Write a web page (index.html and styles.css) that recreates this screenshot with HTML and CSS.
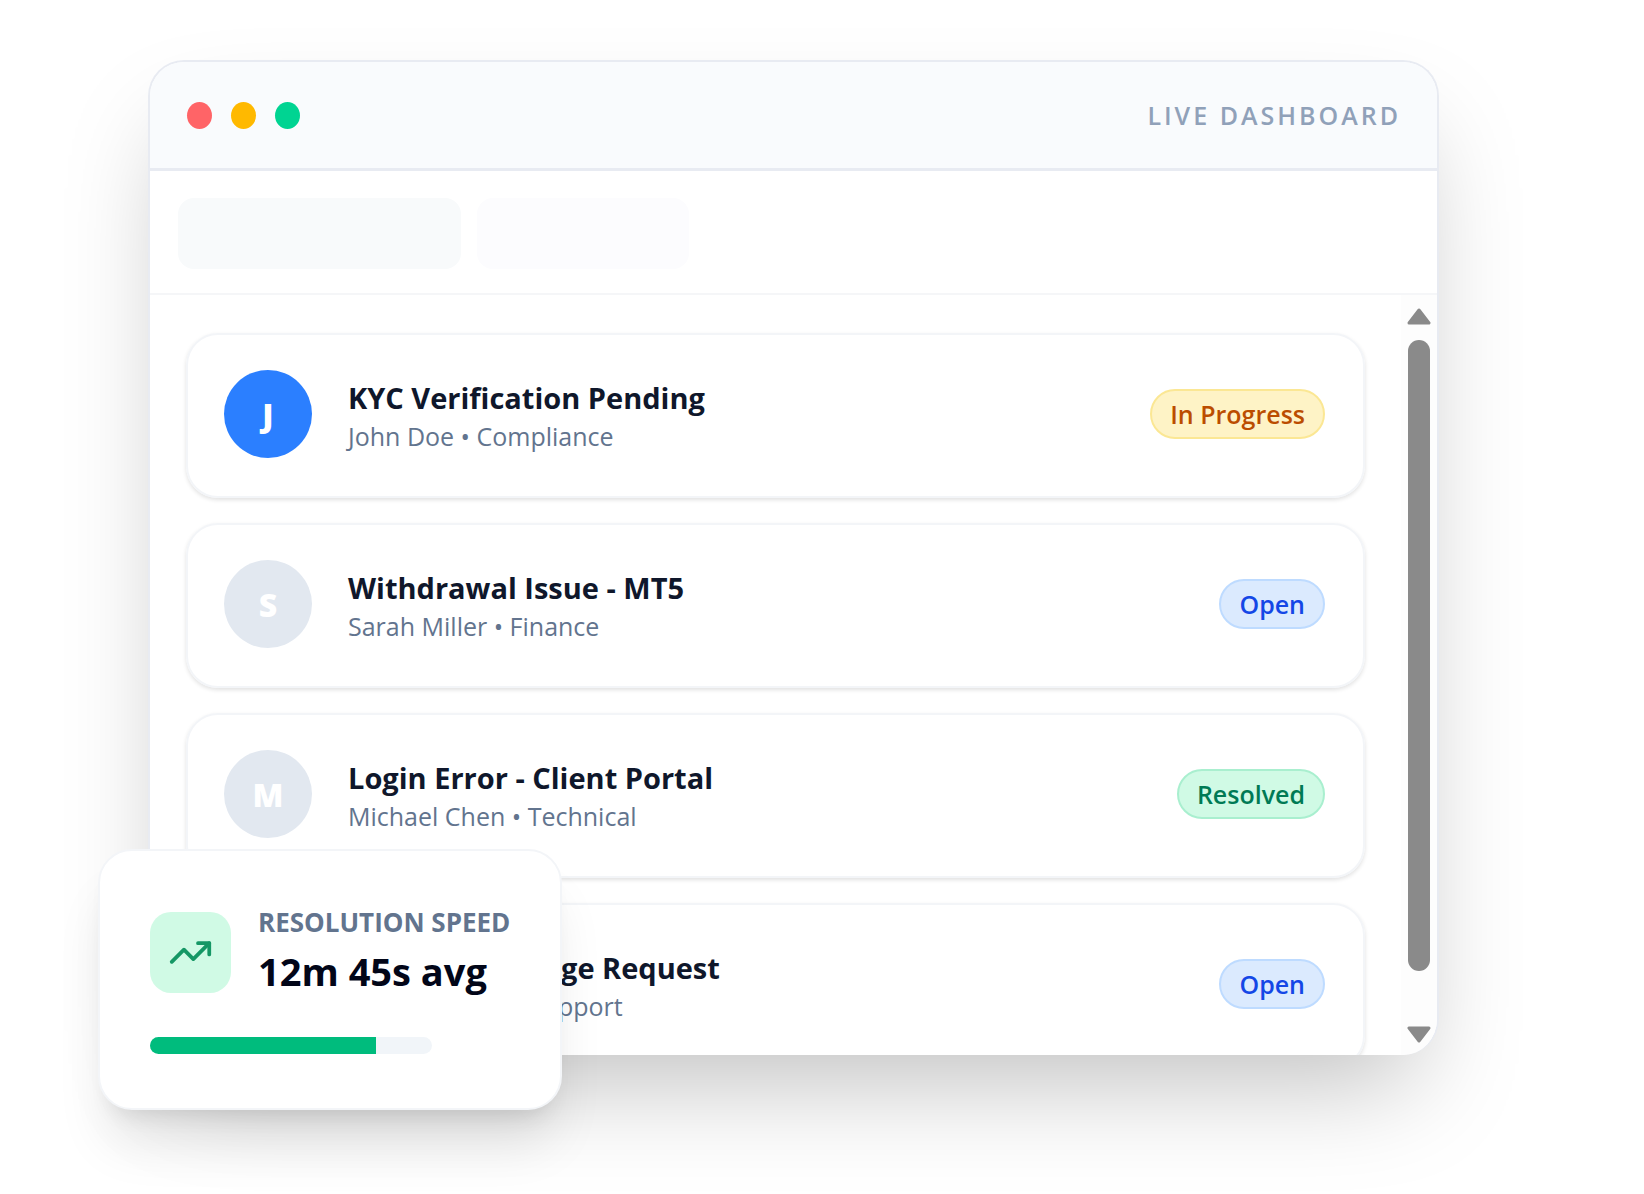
FILE: index.html
```
<!DOCTYPE html>
<html lang="en">

<head>
    <meta charset="utf-8">
    <title>Live Dashboard</title>
    <link rel="stylesheet" href="styles.css">
</head>

<body>

    <main class="stage">
        <div class="preview">

            <!-- App window -->
            <section class="window">
                <header class="titlebar">
                    <div class="dots">
                        <span class="dot red"></span>
                        <span class="dot yellow"></span>
                        <span class="dot green"></span>
                    </div>
                    <span class="live">LIVE DASHBOARD</span>
                </header>

                <div class="toolbar">
                    <div class="skeleton"></div>
                    <div class="skeleton short"></div>
                </div>

                <div class="content">
                    <div class="tickets">
                        <article class="ticket">
                            <div class="avatar active">J</div>
                            <div class="info">
                                <h3>KYC Verification Pending</h3>
                                <p>John Doe • Compliance</p>
                            </div>
                            <span class="badge progress">In Progress</span>
                        </article>
                        <article class="ticket">
                            <div class="avatar">S</div>
                            <div class="info">
                                <h3>Withdrawal Issue - MT5</h3>
                                <p>Sarah Miller • Finance</p>
                            </div>
                            <span class="badge open">Open</span>
                        </article>
                        <article class="ticket">
                            <div class="avatar">M</div>
                            <div class="info">
                                <h3>Login Error - Client Portal</h3>
                                <p>Michael Chen • Technical</p>
                            </div>
                            <span class="badge resolved">Resolved</span>
                        </article>
                        <article class="ticket">
                            <div class="avatar">E</div>
                            <div class="info">
                                <h3>Leverage Change Request</h3>
                                <p>Emma Wilson • Support</p>
                            </div>
                            <span class="badge open">Open</span>
                        </article>
                    </div>

                    <!-- Scrollbar -->
                    <div class="scrollbar">
                        <svg width="24" height="18" viewBox="0 0 24 18">
                            <path d="M12 3 L22 16 H2 Z" />
                        </svg>
                        <div class="track">
                            <div class="thumb"></div>
                        </div>
                        <svg width="24" height="18" viewBox="0 0 24 18">
                            <path d="M2 2 H22 L12 15 Z" />
                        </svg>
                    </div>
                </div>
            </section>

            <!-- Floating stat -->
            <aside class="stat">
                <div class="stat-top">
                    <div class="stat-icon">
                        <svg width="45" height="45" viewBox="0 0 24 24">
                            <polyline points="22 7 13.5 15.5 8.5 10.5 2 17" />
                            <polyline points="16 7 22 7 22 13" />
                        </svg>
                    </div>
                    <div>
                        <p class="stat-label">RESOLUTION SPEED</p>
                        <p class="stat-value">12m 45s avg</p>
                    </div>
                </div>
                <div class="bar">
                    <div class="fill" style="width: 80%"></div>
                </div>
            </aside>

        </div>
    </main>

</body>

</html>
```
FILE: styles.css
```
* {
    box-sizing: border-box;
}

body {
    margin: 0;
    background: #fff;
    font-family: "Open Sans", "Noto Sans", sans-serif;
    color: #0f172b;
    overflow: hidden;
}

h3,
p {
    margin: 0;
}

.stage {
    padding: 60px 205px 138px 148px;
}

.preview {
    position: relative;
}

/* window */
.window {
    background: #fff;
    border: 2px solid #e8ebf2;
    border-bottom: none;
    border-radius: 36px;
    overflow: hidden;
    box-shadow: 0 52px 104px -25px rgba(0, 0, 0, 0.25);
}

.titlebar {
    display: flex;
    align-items: center;
    justify-content: space-between;
    height: 109px;
    padding: 0 36px 0 37px;
    background: #f9fbfd;
    border-bottom: 3px solid #e8ebf2;
}

.dots {
    display: flex;
    gap: 19px;
}

.dot {
    width: 25px;
    height: 27px;
    border-radius: 50%;
}

.red {
    background: #ff6467;
}

.yellow {
    background: #ffb900;
}

.green {
    background: #00d492;
}

.live {
    font-size: 25px;
    font-weight: 600;
    letter-spacing: 3px;
    color: #90a1b9;
}

.toolbar {
    display: flex;
    gap: 16px;
    padding: 27px 28px 24px;
    border-bottom: 2px solid #f5f6f8;
}

.skeleton {
    width: 283px;
    height: 71px;
    border-radius: 16px;
    background: #f8fafb;
}

.skeleton.short {
    width: 212px;
    background: #fcfcfe;
}

/* ticket list */
.content {
    display: flex;
    max-height: 760px;
}

.tickets {
    flex: 1;
    display: flex;
    flex-direction: column;
    gap: 25px;
    padding: 38px 36px 0 36px;
}

.ticket {
    flex: none;
    display: flex;
    align-items: center;
    gap: 36px;
    padding: 35px 38px 38px 36px;
    border: 2px solid #f3f5f8;
    border-radius: 32px;
    box-shadow: 0 2px 4px rgba(0, 0, 0, 0.12);
}

.avatar {
    display: flex;
    align-items: center;
    justify-content: center;
    width: 88px;
    height: 88px;
    border-radius: 50%;
    background: #e2e8f0;
    color: #fff;
    font-size: 32px;
    font-weight: 800;
}

.avatar.active {
    background: #2b7fff;
}

.info {
    flex: 1;
    padding-top: 6px;
}

.info h3 {
    font-size: 29px;
    font-weight: 700;
    line-height: 38px;
}

.info p {
    font-size: 25px;
    line-height: 38px;
    color: #62748e;
}

.badge {
    padding: 0 18px;
    border: 2px solid;
    border-radius: 25px;
    font-size: 25px;
    font-weight: 600;
    line-height: 46px;
}

.progress {
    background: #fef3c6;
    border-color: #fbe794;
    color: #bb4d00;
}

.open {
    background: #dbeafe;
    border-color: #bedbff;
    color: #1447e6;
}

.resolved {
    background: #d0fae5;
    border-color: #a9efcf;
    color: #007a55;
}

/* scrollbar */
.scrollbar {
    display: flex;
    flex-direction: column;
    align-items: center;
    width: 36px;
    padding: 12px 0 11px;
    background: #fdfdfd;
}

.scrollbar svg {
    flex: none;
    fill: #8a8a8a;
    stroke: #8a8a8a;
    stroke-width: 3;
    stroke-linejoin: round;
}

.track {
    flex: 1;
    padding: 15px 0 55px;
}

.thumb {
    width: 22px;
    height: 100%;
    border-radius: 11px;
    background: #8a8a8a;
}

/* floating stat card */
.stat {
    position: absolute;
    left: -50px;
    bottom: -55px;
    padding: 52px 50px 54px 50px;
    background: #fff;
    border: 2px solid #f3f5f8;
    border-radius: 34px;
    box-shadow: 0 42px 52px -10px rgba(0, 0, 0, 0.1), 0 17px 21px -13px rgba(0, 0, 0, 0.1);
}

.stat-top {
    display: flex;
    align-items: center;
    gap: 27px;
}

.stat-icon {
    display: flex;
    align-items: center;
    justify-content: center;
    width: 81px;
    height: 81px;
    border-radius: 21px;
    background: #d0fae5;
}

.stat-icon svg {
    fill: none;
    stroke: #159765;
    stroke-width: 2;
    stroke-linecap: round;
    stroke-linejoin: round;
}

.stat-label {
    font-size: 26px;
    font-weight: 700;
    line-height: 38px;
    color: #62748e;
}

.stat-value {
    font-size: 38px;
    font-weight: 700;
    line-height: 60px;
    color: #020618;
}

.bar {
    width: 282px;
    height: 17px;
    margin-top: 36px;
    border-radius: 9px;
    background: #f1f5f9;
    overflow: hidden;
}

.fill {
    height: 100%;
    background: #00bc7d;
}
```
